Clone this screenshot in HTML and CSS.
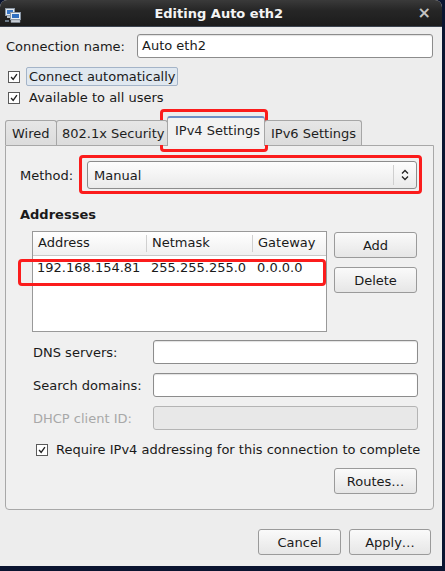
FILE: index.html
```html
<!DOCTYPE html>
<html>
<head>
<meta charset="utf-8">
<link rel="stylesheet" href="styles.css">
</head>
<body>
<div class="window">
  <div class="titlebar">
    <svg class="app-icon" width="16" height="15" viewBox="0 0 16 15">
      <rect x="0.5" y="0.5" width="9" height="7" fill="#dfe6ee" stroke="#8a96a4"/>
      <rect x="2" y="2" width="6" height="4" fill="#3a78c8"/>
      <rect x="2" y="8" width="6" height="2" fill="#b8c0c8"/>
      <rect x="5.5" y="4.5" width="10" height="7" fill="#e8eef4" stroke="#8a96a4"/>
      <rect x="7" y="6" width="7" height="4" fill="#2f6ec0"/>
      <rect x="6" y="12" width="9" height="2.5" fill="#c8ced6" stroke="#8a96a4" stroke-width="0.5"/>
      <rect x="0" y="12" width="4" height="2" fill="#6b7a88"/>
    </svg>
    <div class="title">Editing Auto eth2</div>
    <div class="close">×</div>
  </div>
  <div class="body">
    <div class="name-row">
      <span class="label">Connection name:</span>
      <div class="entry name-entry">Auto eth2</div>
    </div>
    <div class="check-row focus-row">
      <span class="checkbox"><svg viewBox="0 0 12 12"><path d="M2.5 6 L5 9 L9.5 2.5" fill="none" stroke="#222" stroke-width="1.6"/></svg></span>
      <span class="check-label focused">Connect automatically</span>
    </div>
    <div class="check-row">
      <span class="checkbox"><svg viewBox="0 0 12 12"><path d="M2.5 6 L5 9 L9.5 2.5" fill="none" stroke="#222" stroke-width="1.6"/></svg></span>
      <span class="check-label">Available to all users</span>
    </div>

    <div class="tabs">
      <div class="tab tab-wired">Wired</div>
      <div class="tab tab-sec">802.1x Security</div>
      <div class="tab tab-active">IPv4 Settings</div>
      <div class="tab tab-v6">IPv6 Settings</div>
    </div>
    <div class="panel">
      <div class="method-row">
        <span class="label">Method:</span>
        <div class="combo">
          <span class="combo-text">Manual</span>
          <span class="combo-sep"></span>
          <svg class="combo-arrows" width="8" height="12" viewBox="0 0 8 12"><path d="M1 4.5 L4 1.5 L7 4.5 M1 7.5 L4 10.5 L7 7.5" fill="none" stroke="#222" stroke-width="1.3"/></svg>
        </div>
      </div>
      <div class="section-title">Addresses</div>
      <div class="addr-area">
        <div class="table">
          <div class="thead">
            <div class="th c1">Address</div>
            <div class="th c2">Netmask</div>
            <div class="th c3">Gateway</div>
          </div>
          <div class="tr">
            <div class="td c1">192.168.154.81</div>
            <div class="td c2">255.255.255.0</div>
            <div class="td c3">0.0.0.0</div>
          </div>
        </div>
        <div class="side-buttons">
          <div class="button">Add</div>
          <div class="button">Delete</div>
        </div>
      </div>
      <div class="form">
        <span class="label">DNS servers:</span>
        <div class="entry"></div>
        <span class="label">Search domains:</span>
        <div class="entry"></div>
        <span class="label disabled">DHCP client ID:</span>
        <div class="entry entry-disabled"></div>
      </div>
      <div class="check-row require-row">
        <span class="checkbox"><svg viewBox="0 0 12 12"><path d="M2.5 6 L5 9 L9.5 2.5" fill="none" stroke="#222" stroke-width="1.6"/></svg></span>
        <span class="check-label">Require IPv4 addressing for this connection to complete</span>
      </div>
      <div class="routes-row">
        <div class="button">Routes…</div>
      </div>
    </div>
    <div class="dialog-buttons">
      <div class="button btn-cancel">Cancel</div>
      <div class="button btn-apply">Apply…</div>
    </div>

    <div class="mark mark-tab"></div>
    <div class="mark mark-method"></div>
    <div class="mark mark-row"></div>
  </div>
</div>
</body>
</html>
```
FILE: styles.css
```css
html, body {
  margin: 0;
  padding: 0;
  background: #0a1430;
}
body {
  width: 445px;
  height: 571px;
  overflow: hidden;
  font-family: "DejaVu Sans", sans-serif;
  font-size: 13px;
  color: #1a1a1a;
}
.window {
  width: 442px;
  height: 566px;
  display: flex;
  flex-direction: column;
  background: #ededed;
  border-radius: 7px 7px 0 0;
  overflow: hidden;
}
.titlebar {
  height: 27px;
  flex: none;
  display: flex;
  align-items: center;
  background: linear-gradient(#3a3a3a, #262626 40%, #1c1c1c);
  border-bottom: 1px solid #3c4450;
  box-sizing: border-box;
  position: relative;
}
.app-icon {
  margin-left: 5px;
  margin-top: 4px;
}
.title {
  flex: 1;
  text-align: center;
  color: #f4f4f4;
  font-weight: bold;
  font-size: 13px;
  margin-left: -1px;
}
.close {
  color: #c4c4c4;
  font-weight: bold;
  font-size: 16px;
  margin-right: 11px;
  line-height: 1;
}
.body {
  flex: 1;
  position: relative;
  padding: 0 8px 0 5px;
  display: flex;
  flex-direction: column;
}
.label {
  white-space: nowrap;
}
.label.disabled {
  color: #a8a8a8;
}
.name-row {
  display: flex;
  align-items: center;
  margin-top: 7px;
  height: 24px;
  padding-left: 1px;
}
.name-row .label {
  width: 131px;
}
.entry {
  height: 24px;
  box-sizing: border-box;
  border: 1px solid #8c8c8c;
  border-radius: 3px;
  background: #fff;
  box-shadow: inset 0 1px 1px rgba(0,0,0,0.12);
  padding: 3px 5px;
  line-height: 16px;
}
.name-entry {
  width: 296px;
  padding-left: 4px;
}
.check-row {
  display: flex;
  align-items: center;
  height: 21px;
}
.focus-row {
  margin-top: 8px;
}
.checkbox {
  width: 12px;
  height: 12px;
  box-sizing: border-box;
  border: 1px solid #5a5a5a;
  background: #fff;
  margin-left: 3px;
  margin-right: 6px;
  display: flex;
}
.checkbox svg {
  width: 10px;
  height: 10px;
}
.check-label {
  padding: 1px 2px;
  border: 1px solid transparent;
  border-radius: 2px;
  white-space: nowrap;
}
.check-label.focused {
  background: #e0e8f0;
  border-color: #a4b4c8;
  padding-right: 1px;
}
.tabs {
  display: flex;
  align-items: flex-end;
  margin-top: 7px;
  height: 30px;
  position: relative;
  z-index: 1;
}
.tab {
  height: 25px;
  box-sizing: border-box;
  border: 1px solid #a6a6a6;
  border-bottom: none;
  border-radius: 3px 3px 0 0;
  background: linear-gradient(#e6e6e6, #dcdcdc);
  padding: 5px 6px 0;
  white-space: nowrap;
  overflow: hidden;
  color: #1e1e1e;
}
.tab-wired {
  width: 52px;
}
.tab-sec {
  width: 112px;
  margin-left: -1px;
  padding-left: 5px;
}
.tab-active {
  width: 98px;
  height: 30px;
  margin-left: -1px;
  margin-bottom: -1px;
  background: #f2f2f2;
  border-top: 2px solid #6d8fc6;
  padding: 5px 6px 0 7px;
  position: relative;
}
.tab-v6 {
  width: 98px;
  margin-left: -1px;
  padding-left: 6px;
}
.panel {
  width: 429px;
  height: 365px;
  box-sizing: border-box;
  border: 1px solid #a8a8a8;
  border-radius: 0 0 4px 4px;
  background: #f0f0f0;
  padding: 15px 16px 0 14px;
  display: flex;
  flex-direction: column;
}
.method-row {
  display: flex;
  align-items: center;
  height: 28px;
}
.method-row .label {
  width: 67px;
}
.combo {
  flex: 1;
  height: 28px;
  box-sizing: border-box;
  border: 1px solid #8c8c8c;
  border-radius: 3px;
  background: linear-gradient(#fdfdfd, #eaeaea);
  display: flex;
  align-items: center;
  padding-left: 6px;
}
.combo-text {
  flex: 1;
}
.combo-sep {
  width: 1px;
  height: 20px;
  background: #cfcfcf;
  margin-right: 7px;
}
.combo-arrows {
  margin-right: 7px;
}
.section-title {
  font-weight: bold;
  margin-top: 18px;
  height: 18px;
}
.addr-area {
  display: flex;
  margin-top: 6px;
  padding-left: 12px;
}
.table {
  width: 297px;
  height: 101px;
  box-sizing: border-box;
  border: 1px solid #999;
  background: #fff;
}
.thead {
  display: flex;
  height: 24px;
  border-bottom: 1px solid #c8c8c8;
  background: linear-gradient(#ffffff, #f0f0f0);
  box-sizing: border-box;
}
.th {
  padding-left: 5px;
  box-sizing: border-box;
  margin: 3px 0;
  line-height: 16px;
}
.th.c1, .th.c2 {
  border-right: 1px solid #d0d0d0;
}
.c1 { width: 114px; }
.c2 { width: 106px; }
.c3 { flex: 1; }
.tr {
  display: flex;
  height: 22px;
  align-items: center;
}
.td {
  padding-left: 4px;
  box-sizing: border-box;
  white-space: nowrap;
}
.side-buttons {
  display: flex;
  flex-direction: column;
  gap: 9px;
  margin-left: 7px;
  margin-top: 1px;
}
.button {
  height: 26px;
  box-sizing: border-box;
  border: 1px solid #9a9a9a;
  border-radius: 3px;
  background: linear-gradient(#fafafa, #e6e6e6);
  display: flex;
  align-items: center;
  justify-content: center;
  white-space: nowrap;
}
.side-buttons .button, .routes-row .button {
  width: 83px;
}
.form {
  display: grid;
  grid-template-columns: 120px 265px;
  row-gap: 9px;
  align-items: center;
  margin-top: 8px;
  padding-left: 13px;
}
.form .entry {
  height: 24px;
}
.entry-disabled {
  background: #e8e8e8;
  border-color: #b4b4b4;
  box-shadow: none;
}
.require-row {
  margin-top: 9px;
  padding-left: 13px;
}
.require-row .checkbox {
  margin-right: 5px;
}
.routes-row {
  display: flex;
  justify-content: flex-end;
  margin-top: 8px;
  padding-right: 0;
}
.dialog-buttons {
  display: flex;
  justify-content: flex-end;
  gap: 8px;
  margin-top: 19px;
  padding-right: 3px;
}
.btn-cancel { width: 83px; }
.btn-apply { width: 82px; }

.mark {
  position: absolute;
  border: 3px solid #fb1c1c;
  border-radius: 4px;
  box-sizing: border-box;
}
.mark-tab {
  left: 160px;
  top: 82px;
  width: 108px;
  height: 43px;
}
.mark-method {
  left: 79px;
  top: 128px;
  width: 343px;
  height: 39px;
}
.mark-row {
  left: 18px;
  top: 232px;
  width: 308px;
  height: 27px;
}
```
